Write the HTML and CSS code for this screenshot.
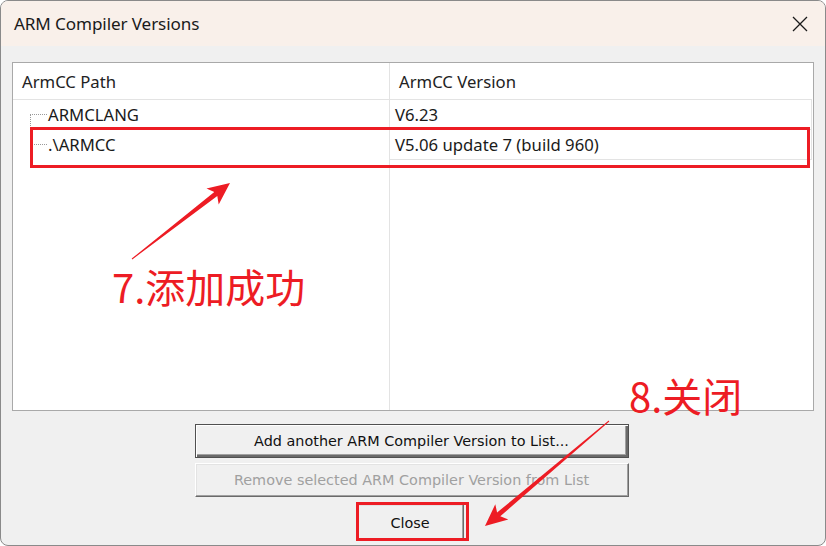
FILE: index.html
```html
<!DOCTYPE html>
<html>
<head>
<meta charset="utf-8">
<link rel="stylesheet" href="styles.css">
</head>
<body>
<div class="window">
  <div class="titlebar">
    <span class="title">ARM Compiler Versions</span>
    <svg class="close-x" width="16" height="16" viewBox="0 0 16 16"><path d="M1 1L15 15M15 1L1 15" stroke="#1a1a1a" stroke-width="1.3" fill="none"/></svg>
  </div>
  <div class="content">
    <div class="listbox">
      <div class="col col-path">
        <div class="hcell">ArmCC Path</div>
        <div class="tree">
          <div class="trow"><span class="branch"></span>ARMCLANG</div>
          <div class="trow"><span class="branch"></span>.\ARMCC</div>
        </div>
      </div>
      <div class="col col-ver">
        <div class="hcell">ArmCC Version</div>
        <div class="vrow">V6.23</div>
        <div class="vrow">V5.06 update 7 (build 960)</div>
      </div>
    </div>
    <div class="buttons">
      <button class="btn btn-default">Add another ARM Compiler Version to List...</button>
      <button class="btn btn-disabled">Remove selected ARM Compiler Version from List</button>
      <button class="btn btn-close">Close</button>
    </div>
  </div>

  <div class="mark mark-row"></div>
  <div class="mark mark-close"></div>
  <div class="note note-7">7.添加成功</div>
  <div class="note note-8">8.关闭</div>
  <svg class="arrows" width="826" height="546" viewBox="0 0 826 546">
    <polygon fill="#ed1c24" points="132.3,259.4 217.3,196.0 218.7,204.4 230,183 206.5,188.6 214.3,192.0 131.7,258.6"/>
    <polygon fill="#ed1c24" points="609.3,421.4 500.3,516.3 508.3,519.4 485,526 495.3,504.2 497.1,512.5 608.7,420.6"/>
  </svg>
</div>
</body>
</html>
```
FILE: styles.css
```css
* { box-sizing: border-box; }
html, body { margin: 0; padding: 0; background: #ffffff; }
body { width: 826px; height: 546px; overflow: hidden; }

.window {
  position: relative;
  width: 826px;
  height: 546px;
  border: 1px solid #8a8a8a;
  border-radius: 8px;
  overflow: hidden;
  background: #f0f0f0;
  display: flex;
  flex-direction: column;
  font-family: "Noto Sans", "Open Sans", sans-serif;
  color: #1a1a1a;
}

.titlebar {
  height: 45px;
  flex: none;
  background: #f9f0ea;
  display: flex;
  align-items: center;
  justify-content: space-between;
  padding: 0 17px 0 13px;
}
.title { font-size: 17.1px; letter-spacing: -0.1px; }
.close-x { display: block; }

.content {
  flex: 1;
  padding: 16px 11px 0 11px;
  display: flex;
  flex-direction: column;
}

.listbox {
  height: 349px;
  border: 1px solid #a9a9a9;
  background: #ffffff;
  display: flex;
  font-size: 16.7px;
}
.col { display: flex; flex-direction: column; }
.col-path { width: 377px; border-right: 1px solid #e3e3e3; }
.col-ver { flex: 1; padding-right: 1px; }

.hcell {
  height: 37px;
  flex: none;
  border-bottom: 1px solid #e3e3e3;
  display: flex;
  align-items: center;
  padding-left: 9px;
  padding-top: 1px;
  color: #222;
}

.tree { position: relative; padding-left: 35px; }
.tree::before {
  content: "";
  position: absolute;
  left: 17px;
  top: 14px;
  height: 30px;
  border-left: 1px dotted #9a9a9a;
}
.trow {
  height: 30px;
  display: flex;
  align-items: center;
  position: relative;
  padding-bottom: 1px;
}
.branch {
  position: absolute;
  left: -18px;
  top: 14px;
  width: 17px;
  border-top: 1px dotted #9a9a9a;
}

.vrow {
  height: 30px;
  border-bottom: 1px solid #e3e3e3;
  border-right: 1px solid #e3e3e3;
  display: flex;
  align-items: center;
  padding-left: 5px;
  padding-bottom: 1px;
}

.buttons {
  display: flex;
  flex-direction: column;
  align-items: center;
  padding-top: 13px;
  padding-right: 3px;
  gap: 5px;
}
.btn {
  font-family: "DejaVu Sans", "Liberation Sans", sans-serif;
  font-size: 14.4px;
  background: #f0f0f0;
  color: #111;
  padding: 0;
  margin: 0;
  border: 1px solid;
  border-color: #ffffff #6a6a6a #6a6a6a #ffffff;
  box-shadow: inset -1px -1px 0 #a0a0a0, inset 1px 1px 0 #e3e3e3;
  width: 434px;
  height: 34px;
}
.btn-default {
  border: 1px solid #505050;
  box-shadow: inset 1px 1px 0 #ffffff, inset -2px -2px 0 #6a6a6a, inset -3px -3px 0 #a0a0a0;
  height: 34px;
}
.btn-disabled { color: #a0a0a0; }
.btn-close { width: 107px; height: 36px; margin-top: 2px; margin-left: -3px; padding-top: 2px; }

.mark {
  position: absolute;
  border: 3px solid #ed1c24;
}
.mark-row { left: 29px; top: 126px; width: 780px; height: 41px; }
.mark-close { left: 355px; top: 501px; width: 113px; height: 39px; }

.note {
  position: absolute;
  color: #ed1c24;
  font-family: "Noto Sans CJK SC", "Noto Sans", sans-serif;
  font-size: 40px;
  line-height: 1;
  white-space: nowrap;
}
.note-7 { left: 111px; top: 265px; }
.note-8 { left: 628px; top: 374px; }

.arrows { position: absolute; left: -1px; top: -1px; pointer-events: none; }
```
